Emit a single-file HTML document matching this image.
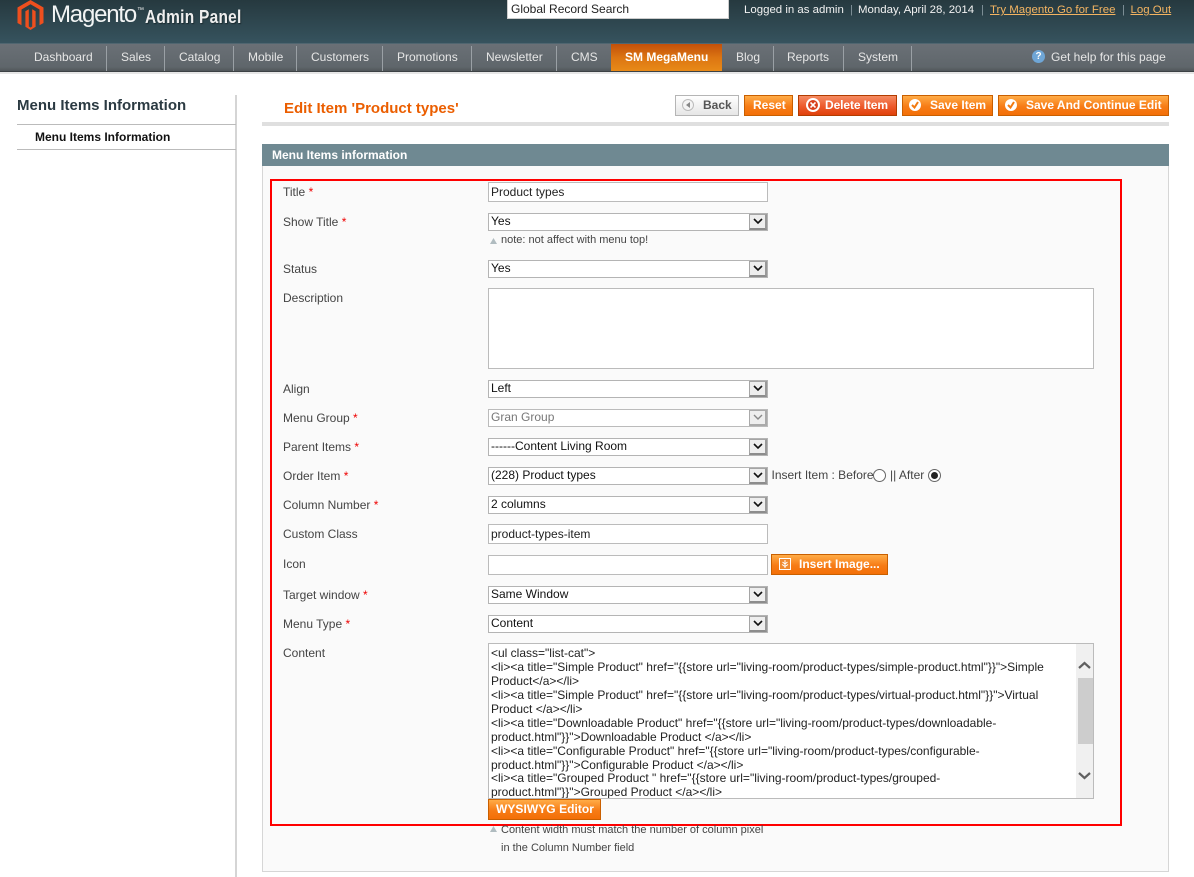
<!DOCTYPE html>
<html><head><meta charset="utf-8"><style>
html,body{margin:0;padding:0;background:#fff}
body{width:1194px;height:877px;position:relative;overflow:hidden;font:12px "Liberation Sans",Arial,sans-serif;color:#444}
.a,.t,.l,.sel,.inp,.btn,.n,.s{position:absolute;white-space:nowrap}
.t{line-height:14px}
.l{left:283px;line-height:14px;color:#444}
.l b{color:#e00;font-weight:normal}
.inp{left:488px;width:278px;height:18px;background:#fff;border:1px solid #bbb;line-height:18px;padding:0;color:#222}
.inp span{margin-left:2px}
.sel{left:488px;width:278px;height:16px;background:#fff;border:1px solid #b4b4b4;color:#111;line-height:14px}
.sel span{margin-left:2px}
.sel i{position:absolute;right:0;top:0;width:18px;height:16px;background:#eee;border-left:1px solid #a5a5a5;border-top:1px solid #a5a5a5;border-right:2px solid #999;border-bottom:2px solid #8c8c8c;box-sizing:border-box}
.sel svg{position:absolute;left:3px;top:2px}
.n{top:50px;color:#e6e6e6;line-height:14px}
.s{top:46px;width:1px;height:25px;background:#9aa0a5}
.btn{top:95px;height:19px;border:1px solid #c95f00;background:linear-gradient(#ffac47,#f77c16 55%,#f36f07);color:#fff;font-weight:bold;line-height:18px;box-sizing:content-box;text-align:left}
.btn span{position:absolute;top:0}
.ck{position:absolute;left:6px;top:3px;width:12px;height:12px;border-radius:50%;background:#fff}
.ck svg{position:absolute;left:2px;top:2px}
.h{top:3px;font-size:11.45px}
</style></head><body>
<div class="a" style="left:0;top:0;width:1194px;height:43px;background:linear-gradient(#26393f,#36535e)"></div>
<div class="a" style="left:0;top:43px;width:1194px;height:1px;background:#506670"></div>
<div class="a" style="left:0;top:44px;width:1194px;height:27px;background:linear-gradient(#6a7076,#5f666b 85%,#50565a)"></div>
<div class="a" style="left:0;top:71px;width:1194px;height:1px;background:#3c4144"></div>
<div class="a" style="left:0;top:72px;width:1194px;height:2px;background:#e6e6e6"></div>

<svg class="a" style="left:17px;top:0" width="27" height="31" viewBox="0 0 27 31"><path d="M13.500 0L26.500 7.500V23L22.500 25.300V9.500L13.500 4.300L4.500 9.500V25.300L0.500 23V7.500Z" fill="#ee4f1e"/><path d="M11.800 9.300V26.500L13.500 27.500L15.200 26.500V9.300L18.600 11.300V26.800L13.500 30L8.400 26.800V11.300Z" fill="#ee4f1e"/></svg>
<div class="t" style="left:51px;top:-1px;font-size:24px;line-height:31px;height:31px;color:#f2f4f4;letter-spacing:-1.200px">Magento</div>
<div class="t" style="left:137px;top:7px;font-size:7px;line-height:8px;color:#eee">™</div>
<div class="t" style="left:145px;top:6px;font-size:18px;line-height:22px;color:#eee;font-weight:bold;transform:scaleX(.86);transform-origin:0 0;text-shadow:1px 1px 1px #1a2a2f;letter-spacing:.3px">Admin Panel</div>

<div class="a" style="left:507px;top:-1px;width:220px;height:18px;background:#fff;border:1px solid #ccc;line-height:18px;color:#222"><span style="margin-left:3px">Global Record Search</span></div>
<div class="t h" style="left:744px;color:#f2f2f2">Logged in as admin</div>
<div class="t h" style="left:850px;color:#82939a">|</div>
<div class="t h" style="left:858px;color:#f2f2f2">Monday, April 28, 2014</div>
<div class="t h" style="left:981px;color:#82939a">|</div>
<div class="t h" style="left:990px;color:#f4b461;text-decoration:underline">Try Magento Go for Free</div>
<div class="t h" style="left:1122px;color:#82939a">|</div>
<div class="t h" style="left:1130.500px;color:#f4b461;text-decoration:underline">Log Out</div>

<div class="n" style="left:34px">Dashboard</div><div class="s" style="left:106px"></div>
<div class="n" style="left:121px">Sales</div><div class="s" style="left:164px"></div>
<div class="n" style="left:179px">Catalog</div><div class="s" style="left:233px"></div>
<div class="n" style="left:248px">Mobile</div><div class="s" style="left:296px"></div>
<div class="n" style="left:311px">Customers</div><div class="s" style="left:382px"></div>
<div class="n" style="left:397px">Promotions</div><div class="s" style="left:471px"></div>
<div class="n" style="left:486px">Newsletter</div><div class="s" style="left:556px"></div>
<div class="n" style="left:571px">CMS</div>
<div class="a" style="left:611px;top:44px;width:111px;height:27px;background:linear-gradient(#c2500a,#dc7512 50%,#e88a18)"></div>
<div class="n" style="left:625px;color:#fff;font-weight:bold">SM MegaMenu</div>
<div class="n" style="left:736px">Blog</div><div class="s" style="left:773px"></div>
<div class="n" style="left:787px">Reports</div><div class="s" style="left:843px"></div>
<div class="n" style="left:858px">System</div><div class="s" style="left:911px"></div>
<div class="a" style="left:1032px;top:50px;width:13px;height:13px;border-radius:50%;background:#6fa6d6;border:0;color:#fff;font-size:10px;line-height:13px;text-align:center;font-weight:bold">?</div>
<div class="n" style="left:1051px">Get help for this page</div>

<!-- sidebar -->
<div class="a" style="left:235px;top:95px;width:2px;height:782px;background:#d5d5d5"></div>
<div class="t" style="left:17px;top:97px;font-size:15px;font-weight:bold;line-height:17px;color:#2b3a42">Menu Items Information</div>
<div class="a" style="left:17px;top:124px;width:219px;height:1px;background:#bbb"></div>
<div class="t" style="left:35px;top:130px;font-weight:bold;color:#111">Menu Items Information</div>
<div class="a" style="left:17px;top:149px;width:219px;height:1px;background:#bbb"></div>

<!-- heading -->
<div class="t" style="left:284px;top:100px;font-size:15px;font-weight:bold;line-height:17px;color:#eb5e00">Edit Item 'Product types'</div>
<div class="a" style="left:262px;top:122px;width:907px;height:4px;background:#dfdfdf"></div>

<div class="btn" style="left:675px;width:62px;background:linear-gradient(#fff,#e6e6e6);border-color:#b5b5b5;color:#555"><span style="left:27px">Back</span>
<div class="a" style="left:6px;top:3px;width:12px;height:12px;border-radius:50%;background:#f4f4f4;border:1px solid #bbb;box-sizing:border-box"></div><svg class="a" style="left:10px;top:6px" width="5" height="7"><path d="M4 0V6L0 3Z" fill="#888"/></svg></div>
<div class="btn" style="left:744px;width:47px"><span style="left:8px">Reset</span></div>
<div class="btn" style="left:798px;width:97px;border-color:#b23c00;background:linear-gradient(#f58b62,#ed5a2c 55%,#e0400b)"><span style="left:26px;letter-spacing:-.1px">Delete Item</span>
<div class="a" style="left:7px;top:2px;width:14px;height:14px;border-radius:50%;background:#fff"></div><div class="a" style="left:9px;top:4px;width:10px;height:10px;border-radius:50%;background:#d8401c"></div><svg class="a" style="left:11px;top:6px" width="6" height="6"><path d="M0.500 0.500L5.500 5.500M5.500 0.500L0.500 5.500" stroke="#fff" stroke-width="1.600"/></svg></div>
<div class="btn" style="left:902px;width:89px"><div class="ck" style="left:6px"><svg width="8" height="8"><path d="M1 4L3.500 6.500L7 1" stroke="#f27a10" stroke-width="2" fill="none"/></svg></div><span style="left:27px">Save Item</span></div>
<div class="btn" style="left:998px;width:169px"><div class="ck" style="left:6px"><svg width="8" height="8"><path d="M1 4L3.500 6.500L7 1" stroke="#f27a10" stroke-width="2" fill="none"/></svg></div><span style="left:27px">Save And Continue Edit</span></div>

<!-- panel -->
<div class="a" style="left:262px;top:144px;width:907px;height:22px;background:#6f8992"></div>
<div class="t" style="left:272px;top:148px;color:#fff;font-weight:bold">Menu Items information</div>
<div class="a" style="left:262px;top:166px;width:905px;height:705px;background:#fafafa;border:1px solid #d6d6d6;border-top:0"></div>
<div class="a" style="left:270px;top:179px;width:848px;height:643px;border:2px solid #f00"></div>

<div class="l" style="top:185px">Title <b>*</b></div>
<div class="inp" style="top:182px"><span>Product types</span></div>
<div class="l" style="top:215px">Show Title <b>*</b></div>
<div class="sel" style="top:213px"><span>Yes</span><i><svg width="10" height="9"><path d="M1 2L5 6L9 2" stroke="#111" stroke-width="1.600" fill="none"/></svg></i></div>
<svg class="a" style="left:490px;top:238px" width="7" height="6"><path d="M3.500 0L7 6H0Z" fill="#b0bcc0"/></svg>
<div class="t" style="left:501px;top:233px;font-size:11px;color:#444">note: not affect with menu top!</div>
<div class="l" style="top:262px">Status</div>
<div class="sel" style="top:260px"><span>Yes</span><i><svg width="10" height="9"><path d="M1 2L5 6L9 2" stroke="#111" stroke-width="1.600" fill="none"/></svg></i></div>
<div class="l" style="top:290.500px">Description</div>
<div class="a" style="left:488px;top:288px;width:604px;height:79px;background:#fff;border:1px solid #bbb"></div>
<div class="l" style="top:382px">Align</div>
<div class="sel" style="top:380px"><span>Left</span><i><svg width="10" height="9"><path d="M1 2L5 6L9 2" stroke="#111" stroke-width="1.600" fill="none"/></svg></i></div>
<div class="l" style="top:411px">Menu Group <b>*</b></div>
<div class="sel" style="top:409px;color:#777;border-color:#bbb"><span>Gran Group</span><i style="border-color:#aaa"><svg width="10" height="9"><path d="M1 2L5 6L9 2" stroke="#888" stroke-width="1.400" fill="none"/></svg></i></div>
<div class="l" style="top:440px">Parent Items <b>*</b></div>
<div class="sel" style="top:438px"><span>------Content Living Room</span><i><svg width="10" height="9"><path d="M1 2L5 6L9 2" stroke="#111" stroke-width="1.600" fill="none"/></svg></i></div>
<div class="l" style="top:469px">Order Item <b>*</b></div>
<div class="sel" style="top:467px"><span>(228) Product types</span><i><svg width="10" height="9"><path d="M1 2L5 6L9 2" stroke="#111" stroke-width="1.600" fill="none"/></svg></i></div>
<div class="t" style="left:771.500px;top:468px;color:#444">Insert Item : Before</div>
<div class="a" style="left:873px;top:469px;width:11px;height:11px;border-radius:50%;border:1px solid #666;background:#fff"></div>
<div class="t" style="left:890px;top:468px;color:#444">|| After</div>
<div class="a" style="left:928px;top:469px;width:11px;height:11px;border-radius:50%;border:1px solid #666;background:#fff"></div>
<div class="a" style="left:931px;top:472px;width:7px;height:7px;border-radius:50%;background:#222"></div>
<div class="l" style="top:498px">Column Number <b>*</b></div>
<div class="sel" style="top:496px"><span>2 columns</span><i><svg width="10" height="9"><path d="M1 2L5 6L9 2" stroke="#111" stroke-width="1.600" fill="none"/></svg></i></div>
<div class="l" style="top:526.500px">Custom Class</div>
<div class="inp" style="top:524px"><span>product-types-item</span></div>
<div class="l" style="top:556.500px">Icon</div>
<div class="inp" style="top:555px"></div>
<div class="btn" style="left:771px;top:554px;width:115px;height:19px"><svg class="a" style="left:7px;top:3px" width="12" height="12" viewBox="0 0 12 12"><rect x=".5" y=".5" width="11" height="11" fill="#f08a30" stroke="#fff"/><path d="M6 2V10M3.500 4L6 6L8.500 4M3 6.500L6 8.500L9 6.500" stroke="#fff" fill="none"/></svg><span style="left:27px">Insert Image...</span></div>
<div class="l" style="top:587.500px">Target window <b>*</b></div>
<div class="sel" style="top:586px"><span>Same Window</span><i><svg width="10" height="9"><path d="M1 2L5 6L9 2" stroke="#111" stroke-width="1.600" fill="none"/></svg></i></div>
<div class="l" style="top:616.500px">Menu Type <b>*</b></div>
<div class="sel" style="top:615px"><span>Content</span><i><svg width="10" height="9"><path d="M1 2L5 6L9 2" stroke="#111" stroke-width="1.600" fill="none"/></svg></i></div>
<div class="l" style="top:645.500px">Content</div>

<div class="a" style="left:488px;top:643px;width:604px;height:154px;background:#fff;border:1px solid #bbb;overflow:hidden">
<div class="a" style="left:2px;top:1px;font-size:12px;color:#222">
<div style="line-height:14px;margin-top:1px">&lt;ul class="list-cat"&gt;</div>
<div style="line-height:14px">&lt;li&gt;&lt;a title="Simple Product" href="{{store url="living-room/product-types/simple-product.html"}}"&gt;Simple</div>
<div style="line-height:14px">Product&lt;/a&gt;&lt;/li&gt;</div>
<div style="line-height:14px">&lt;li&gt;&lt;a title="Simple Product" href="{{store url="living-room/product-types/virtual-product.html"}}"&gt;Virtual</div>
<div style="line-height:14px">Product &lt;/a&gt;&lt;/li&gt;</div>
<div style="line-height:14px">&lt;li&gt;&lt;a title="Downloadable Product" href="{{store url="living-room/product-types/downloadable-</div>
<div style="line-height:14px">product.html"}}"&gt;Downloadable Product &lt;/a&gt;&lt;/li&gt;</div>
<div style="line-height:14px">&lt;li&gt;&lt;a title="Configurable Product" href="{{store url="living-room/product-types/configurable-</div>
<div style="line-height:14px">product.html"}}"&gt;Configurable Product &lt;/a&gt;&lt;/li&gt;</div>
<div style="line-height:13px">&lt;li&gt;&lt;a title="Grouped Product " href="{{store url="living-room/product-types/grouped-</div>
<div style="line-height:14px">product.html"}}"&gt;Grouped Product &lt;/a&gt;&lt;/li&gt;</div>
</div>
<div class="a" style="left:587px;top:0;width:17px;height:154px;background:#f0f0f0"></div>
<div class="a" style="left:589px;top:34px;width:15px;height:66px;background:#cdcdcd"></div>
<svg class="a" style="left:589px;top:17px" width="13" height="9"><path d="M1 7L6.500 2L12 7" stroke="#606060" stroke-width="2.200" fill="none"/></svg>
<svg class="a" style="left:589px;top:127px" width="13" height="9"><path d="M1 2L6.500 7L12 2" stroke="#606060" stroke-width="2.200" fill="none"/></svg>
</div>
<div class="btn" style="left:488px;top:799px;width:111px;height:19px"><span style="left:7px;font-size:12px;letter-spacing:.05px">WYSIWYG Editor</span></div>
<svg class="a" style="left:490px;top:826px" width="7" height="6"><path d="M3.500 0L7 6H0Z" fill="#b0bcc0"/></svg>
<div class="t" style="left:501px;top:823px;font-size:11px;color:#444">Content width must match the number of column pixel</div>
<div class="t" style="left:501px;top:841px;font-size:11px;color:#444">in the Column Number field</div>
</body></html>
